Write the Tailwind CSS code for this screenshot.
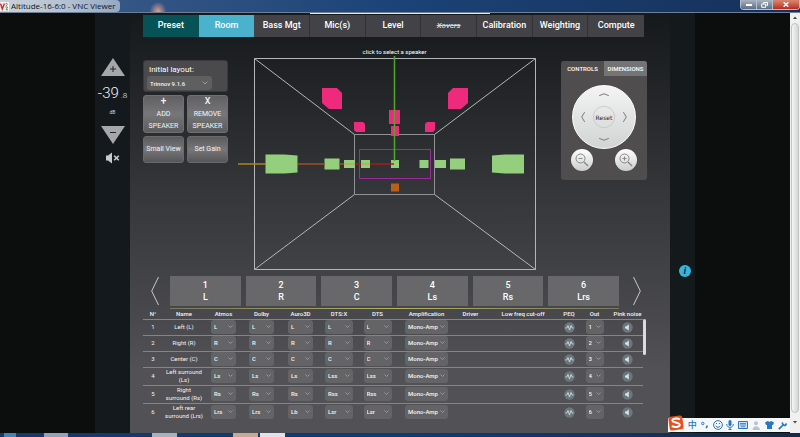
<!DOCTYPE html>
<html lang="en">
<head>
  <meta charset="utf-8" />
  <meta name="viewport" content="width=device-width, initial-scale=1.0" />
  <title>Altitude-16-6:0 - VNC Viewer</title>
  <script src="https://cdn.jsdelivr.net/npm/@tailwindcss/browser@4"></script>
</head>
<body class="font-['Roboto',sans-serif] bg-[#0b0e0d] text-gray-100">
<div class="relative min-h-screen flex flex-col">

  <!-- Window title bar -->
  <header class="h-[13px] flex items-start border-b border-[#6f7f98] bg-linear-to-r from-[#3f5f8c] via-[#1b4377] to-[#16305a]">
    <div class="h-3 flex items-center gap-[2px] pr-1 rounded-r-sm bg-linear-to-r from-[#c9d0da] via-[#b6c3d3] to-[#94a9c4]">
      <svg class="w-[9px] h-[9px]" viewBox="0 0 9 9">
        <rect width="9" height="9" fill="#f4f4f4" />
        <path d="M.5 1.5 2.3 7 4.4 1.5" fill="none" stroke="#d3272b" stroke-width="1.4" />
        <path d="M5.3 2.2C6 1 7.6 1.2 7.3 2.6L5.6 4.2M5.6 5h2L6 7.8h2" fill="none" stroke="#4a8a4d" stroke-width=".9" />
      </svg>
      <h1 class="font-['Open_Sans',sans-serif] text-[8px] leading-3 text-[#10151c]">Altitude-16-6:0 - VNC Viewer</h1>
    </div>
    <div class="flex-1 h-3 flex">
      <div class="ml-7 w-5 h-3 bg-radial-[at_50%_100%] from-[#e9a48c] to-transparent to-60%"></div>
    </div>
    <div class="flex h-[10px] rounded-b-sm overflow-hidden border border-t-0 border-[#b6c0cd]">
      <button class="w-4 bg-linear-to-b from-[#a9b3c2] to-[#5e6f88] border-r border-[#b6c0cd] flex items-center justify-center" aria-label="Minimize">
        <span class="block w-[6px] h-[2px] bg-white"></span>
      </button>
      <button class="w-4 bg-linear-to-b from-[#a9b3c2] to-[#5e6f88] border-r border-[#b6c0cd] flex items-center justify-center" aria-label="Restore">
        <svg class="w-[7px] h-[6px]" viewBox="0 0 7 6" fill="none" stroke="#fff"><path d="M2.5 1.5V.5h4v3h-1M.7 2h4v3.3h-4z" /></svg>
      </button>
      <button class="w-[26px] bg-linear-to-b from-[#d98672] to-[#b8291b] flex items-center justify-center" aria-label="Close">
        <svg class="w-[6px] h-[5px]" viewBox="0 0 6 5" stroke="#fff" stroke-width="1.5"><path d="M.7.3l4.6 4.4M5.3.3L.7 4.7" /></svg>
      </button>
    </div>
  </header>

  <div class="flex-1 flex">
    <div class="w-[95px] shrink-0"></div>

    <!-- Volume -->
    <aside class="w-[35px] shrink-0 bg-[#14191d] pt-[45px] flex flex-col items-center">
      <button aria-label="Volume up">
        <svg class="w-6 h-[18px]" viewBox="0 0 24 18"><path d="M12 0 24 18H0z" fill="#a6a7aa" /><path d="M9 11h6M12 8v6" stroke="#22272b" /></svg>
      </button>
      <div class="mt-[9px] flex items-baseline gap-[2px] font-light leading-4">
        <span class="text-[15px]">-39</span><span class="text-[8px]">.8</span>
      </div>
      <span class="mt-1 text-[5px] leading-2 text-gray-300">dB</span>
      <button class="mt-[10px]" aria-label="Volume down">
        <svg class="w-6 h-[18px]" viewBox="0 0 24 18"><path d="M12 18 24 0H0z" fill="#a6a7aa" /><path d="M9 6.5h6" stroke="#22272b" /></svg>
      </button>
      <button class="mt-2" aria-label="Mute">
        <svg class="w-[14px] h-3" viewBox="0 0 14 12"><path d="M0 3.5h2L6 .5v11l-4-3H0z" fill="#c9cacc" /><path d="M8.2 3.7l4.6 4.6M12.8 3.7 8.2 8.3" stroke="#c9cacc" stroke-width="1.6" /></svg>
      </button>
    </aside>

    <!-- Main panel -->
    <main class="flex-1 min-w-0 relative pl-[13px] pr-[23px] pt-[2px] pb-3 bg-linear-to-b from-[#16191c] from-0% via-[#36383c] via-45% to-[#525155] to-85%">
      <div class="absolute top-0 left-1/3 w-1/3 h-px bg-white/90"></div>
      <nav class="mr-[3px] h-[22px] grid grid-cols-9 text-[9px] font-medium text-white">
        <button class="bg-[#075257]">Preset</button>
        <button class="bg-[#4ab2cd]">Room</button>
        <button class="bg-[#434347] border-r border-[#303236]">Bass Mgt</button>
        <button class="bg-[#434347] border-r border-[#303236]">Mic(s)</button>
        <button class="bg-[#434347] border-r border-[#303236]">Level</button>
        <button class="bg-[#434347] border-r border-[#303236] italic line-through text-gray-300 text-[8px]">Xovers</button>
        <button class="bg-[#434347] border-r border-[#303236]">Calibration</button>
        <button class="bg-[#434347] border-r border-[#303236]">Weighting</button>
        <button class="bg-[#434347]">Compute</button>
      </nav>

      <div class="mt-[11px] flex items-start">
        <section class="w-[85px] shrink-0 pt-3">
          <div class="h-8 rounded-[3px] bg-[#4a4a4d] border border-[#3a3a3d] px-[3px] pt-1">
            <label for="layout" class="block pl-[2px] text-[8px] leading-[10px] text-white">Initial layout:</label>
            <div class="relative w-[65px] mt-px">
              <select id="layout" class="block appearance-none w-full h-[14px] rounded-[3px] bg-[#605f5f] pl-[3px] text-[6px] font-medium">
                <option>Trinnov 9.1.6</option>
              </select>
              <svg class="absolute right-1 top-[5px] w-[6px] h-1 pointer-events-none" viewBox="0 0 6 4" fill="none" stroke="#999"><path d="M.5.5 3 3 5.5.5" /></svg>
            </div>
          </div>
          <div class="mt-[3px] grid grid-cols-2 gap-[3px] text-[7px] text-gray-100">
            <button class="h-[38px] rounded-[3px] bg-linear-to-b from-[#606063] via-[#77777a] to-[#5c5c5f] border border-[#707073] flex flex-col items-center">
              <span class="text-[10px] leading-[10px] font-medium">+</span>
              <span class="leading-3 pt-[2px]">ADD</span>
              <span class="leading-3">SPEAKER</span>
            </button>
            <button class="h-[38px] rounded-[3px] bg-linear-to-b from-[#606063] via-[#77777a] to-[#5c5c5f] border border-[#707073] flex flex-col items-center">
              <span class="text-[9px] leading-[10px] font-medium">X</span>
              <span class="leading-3 pt-[2px]">REMOVE</span>
              <span class="leading-3">SPEAKER</span>
            </button>
            <button class="h-[27px] rounded-[3px] bg-linear-to-b from-[#5b5b5e] via-[#77777a] to-[#565659] border border-[#6a6a6d]">Small View</button>
            <button class="h-[27px] rounded-[3px] bg-linear-to-b from-[#5b5b5e] via-[#77777a] to-[#565659] border border-[#6a6a6d]">Set Gain</button>
          </div>
        </section>

        <!-- Speaker room view -->
        <section class="flex-1 min-w-0">
          <p class="text-center text-[6px] leading-2 text-white">click to select a speaker</p>
          <svg class="block w-full" viewBox="228 56 333 216" fill="none">
            <g stroke="#b4b5b8">
              <path d="M254.500 58.500h281v211h-281z" />
              <path d="M354.500 134.500h80v60h-80z" stroke="#909194" />
              <path d="M254.500 58.500l100 76M535.500 58.500l-101 76M254.500 269.500l100-75M535.500 269.500l-101-75" />
            </g>
            <g fill="#ed2a7b">
              <path d="M322 88h15l5 5v16h-13l-7-6z" />
              <path d="M468 88h-15l-5 5v16h13l7-6z" />
              <path d="M354 122h9l2 2v8h-9l-2-2z" />
              <path d="M435 122h-8l-2 2v8h8l2-2z" />
              <path d="M389 110h11v14h-11zM391 126h8v10h-8z" />
            </g>
            <path d="M359.500 149.500h71v29h-71z" stroke="#9c2a9b" />
            <g fill="#93cf7c">
              <path d="M265.500 154.500h19l13 1v17l-13 1h-19z" />
              <path d="M524 154.500h-19l-13 1v17l13 1h19z" />
              <path d="M324.500 158.500h15v11h-15zM344 160h11v8h-11zM361 160h9v8h-9zM391 160h8v8h-8z" />
              <path d="M419.500 160h9v8h-9zM435 160h11v8h-11zM450 158.500h15v11h-15z" />
            </g>
            <path d="M238 164h28" stroke="#b0831f" stroke-width="1.500" />
            <path d="M298 164h27M339.500 164h4.500" stroke="#a2501f" stroke-width="1.500" />
            <path d="M344 164h11M361 164h9" stroke="#c99a45" stroke-width="1.200" />
            <path d="M355 164h6M370 164h24" stroke="#a51e1c" stroke-width="1.500" />
            <path d="M394.500 56v105" stroke="#55a52a" stroke-width="1.500" />
            <path d="M391 183.500h8v8h-8z" fill="#ba5e18" />
          </svg>
        </section>

        <!-- View controls -->
        <section class="w-[86px] shrink-0 mt-[13px] h-[119px] rounded-[3px] overflow-hidden bg-[#4f4d4e]">
          <div class="grid grid-cols-2 h-[15px] text-[6px] text-white">
            <button class="font-medium">CONTROLS</button>
            <button class="font-medium bg-[#747476]">DIMENSIONS</button>
          </div>
          <div class="relative mt-[9px] mx-auto size-16 rounded-full bg-linear-to-b from-[#f4f4f4] to-[#d2d3d3] border border-white">
            <svg class="absolute inset-0 size-full" viewBox="0 0 64 64" fill="none" stroke="#777">
              <path d="M27 10l5-2 5 2M27 54l5 2 5-2M12 27l-3 5 3 5M52 27l3 5-3 5" />
              <circle cx="32" cy="32" r="11" stroke="#c4c4c4" stroke-width=".8" />
            </svg>
            <button class="relative block mx-auto w-6 h-full font-['DejaVu_Sans',sans-serif] text-[6px] font-medium text-[#222]">Reset</button>
          </div>
          <div class="flex justify-between px-[10px]">
            <button class="size-[22px] rounded-full bg-linear-to-b from-white to-[#cccdcd] flex items-center justify-center" aria-label="Zoom out">
              <svg class="size-[14px]" viewBox="0 0 14 14" fill="none" stroke="#888"><circle cx="5.500" cy="5.500" r="4.500" /><path d="M9 9l4 4" stroke-width="1.500" /><path d="M3.500 5.500h4" /></svg>
            </button>
            <button class="size-[22px] rounded-full bg-linear-to-b from-white to-[#cccdcd] flex items-center justify-center" aria-label="Zoom in">
              <svg class="size-[14px]" viewBox="0 0 14 14" fill="none" stroke="#888"><circle cx="5.500" cy="5.500" r="4.500" /><path d="M9 9l4 4" stroke-width="1.500" /><path d="M3.500 5.500h4M5.500 3.500v4" /></svg>
            </button>
          </div>
        </section>
      </div>

      <!-- Speaker picker -->
      <div class="mt-1 flex items-center">
        <button class="w-[27px] pl-2" aria-label="Previous speakers">
          <svg class="block w-2 h-[30px]" viewBox="0 0 8 30" fill="none" stroke="#c8c8ca"><path d="M7.500 1 .7 15l6.800 14" /></svg>
        </button>
        <div id="speakers" class="flex-1 grid grid-cols-6 gap-[5px]"></div>
        <button class="w-7 pl-[14px]" aria-label="Next speakers">
          <svg class="block w-2 h-[30px]" viewBox="0 0 8 30" fill="none" stroke="#c8c8ca"><path d="M.5 1l6.800 14L.5 29" /></svg>
        </button>
      </div>
      <div class="mt-[2px] ml-[27px] mr-7 h-px bg-linear-to-r from-[#77785f] via-[#b3b45c] to-[#77785f]"></div>

      <!-- Speaker table -->
      <div class="flex">
        <table class="flex-1 w-full table-fixed text-center text-[6px] leading-2">
          <colgroup>
            <col class="w-[20px]" /><col class="w-[42px]" /><col class="w-[37px]" /><col class="w-[39px]" />
            <col class="w-[39px]" /><col class="w-[38px]" /><col class="w-[39px]" /><col class="w-[59px]" />
            <col class="w-[29px]" /><col class="w-[76px]" /><col class="w-[16px]" /><col class="w-[35px]" />
            <col class="w-[31px]" />
          </colgroup>
          <thead>
            <tr class="h-[10px] border-b border-[#858588] whitespace-nowrap">
              <th class="font-medium">N°</th>
              <th class="font-medium">Name</th>
              <th class="font-medium">Atmos</th>
              <th class="font-medium">Dolby</th>
              <th class="font-medium">Auro3D</th>
              <th class="font-medium">DTS:X</th>
              <th class="font-medium">DTS</th>
              <th class="font-medium">Amplification</th>
              <th class="font-medium">Driver</th>
              <th class="font-medium">Low freq cut-off</th>
              <th class="font-medium">PEQ</th>
              <th class="font-medium">Out</th>
              <th class="font-medium">Pink noise</th>
            </tr>
          </thead>
          <tbody id="rows"></tbody>
        </table>
        <div class="w-1 shrink-0 pt-[10px]">
          <div class="w-[3px] h-9 rounded-full bg-[#dcdcde]"></div>
        </div>
      </div>
    </main>

    <aside class="w-[25px] shrink-0 bg-[#14191c] pt-[252px]">
      <button class="ml-[9px] block size-3 rounded-full bg-[#35b5dc] font-['Liberation_Serif',serif] text-[10px] leading-3 font-bold italic text-[#0b2a3a]" aria-label="Info">i</button>
    </aside>
    <div class="w-[95px] shrink-0"></div>

    <!-- Window scrollbar -->
    <div class="w-[10px] shrink-0 bg-[#f0f0f0] flex flex-col items-center">
      <svg class="w-[10px] h-[10px]" viewBox="0 0 10 10"><path d="M5 3.500 7 6H3z" fill="#444" /></svg>
      <div class="w-2 flex-1 rounded-sm border border-[#c3c3c3] bg-linear-to-r from-[#f6f6f6] to-[#d4d4d6]"></div>
      <svg class="w-[10px] h-5" viewBox="0 0 10 20"><path d="M5 10.500 7 8H3z" fill="#444" /></svg>
    </div>
  </div>

  <!-- Taskbar -->
  <footer class="h-1 bg-linear-to-r from-[#143a68] via-[#0d3c78] to-[#122c4e] flex">
    <div class="ml-1 w-3 bg-[#4283b8]"></div>
    <div class="ml-7 w-6 bg-[#8fa4bb]"></div>
    <div class="ml-[84px] w-[25px] bg-[#a5b2c0]"></div>
    <div class="ml-14 w-[25px] bg-[#c3ac92]"></div>
    <div class="ml-[2px] w-[25px] bg-[#dde3ea]"></div>
  </footer>

  <!-- Input method bar -->
  <div class="absolute right-[10px] bottom-[5px] h-[14px] w-[122px] bg-[#f5f7f9] flex items-center justify-between pr-[3px] text-[#2678c3]">
    <svg class="w-4 h-4 -mt-1 shrink-0" viewBox="0 0 16 16"><rect x="1" y="1" width="14" height="14" rx="2.500" fill="#e8501f" transform="rotate(-8 8 8)" /><path d="M12 4.300C8 2.500 4 4 4.500 6c.5 1.700 7.500 1.500 7.300 3.900-.2 2.300-5 2.700-8 1.100" fill="none" stroke="#fff" stroke-width="2" /></svg>
    <span class="font-['Noto_Sans_CJK_SC',sans-serif] text-[9px] leading-3 font-medium">中</span>
    <svg class="w-2 h-2" viewBox="0 0 8 8"><circle cx="1.800" cy="2.500" r="1.200" fill="none" stroke="currentColor" /><path d="M6 4.500v1.200L5 7" fill="none" stroke="currentColor" stroke-width="1.600" /></svg>
    <svg class="w-[10px] h-[10px]" viewBox="0 0 10 10" fill="none" stroke="currentColor"><circle cx="5" cy="5" r="4.400" /><path d="M2.700 5.800c1 2 3.600 2 4.600 0M3.500 3v1M6.500 3v1" /></svg>
    <svg class="w-2 h-[10px]" viewBox="0 0 8 10"><rect x="2.500" width="3" height="6" rx="1.500" fill="currentColor" /><path d="M.7 4c0 4.500 6.600 4.500 6.600 0M4 7.500V10M2.500 9.500h3" fill="none" stroke="currentColor" /></svg>
    <svg class="w-[10px] h-2" viewBox="0 0 10 8"><path d="M.5.500h9v7h-9z" fill="#cfe1f2" stroke="currentColor" /><path d="M2 2.500h6M2 4h6M3 5.700h4" stroke="currentColor" stroke-width=".8" /></svg>
    <svg class="w-[9px] h-[9px]" viewBox="0 0 9 9" fill="#b9c3ce"><circle cx="4" cy="2.200" r="2" /><path d="M.5 9c0-5 7-5 7.500 0z" /></svg>
    <svg class="w-[9px] h-2" viewBox="0 0 9 8"><path d="M0 1.500 2.800 0c.8 1 2.600 1 3.400 0L9 1.500 8 4H7v4H2V4H1z" fill="currentColor" /></svg>
    <svg class="w-[9px] h-[9px]" viewBox="0 0 9 9"><path d="M.8 8.200 5 4M4.700 1.500c-.8 1.200 1.400 3.600 2.800 2.700L8.500 2.500" fill="none" stroke="currentColor" stroke-width="1.700" /></svg>
  </div>
</div>

<script>
  const speakers = [
    { name: 'Left (L)', ch: 'L', formats: ['L', 'L', 'L', 'L', 'L'] },
    { name: 'Right (R)', ch: 'R', formats: ['R', 'R', 'R', 'R', 'R'] },
    { name: 'Center (C)', ch: 'C', formats: ['C', 'C', 'C', 'C', 'C'] },
    { name: 'Left surround (Ls)', ch: 'Ls', formats: ['Ls', 'Ls', 'Ls', 'Lss', 'Lss'] },
    { name: 'Right surround (Rs)', ch: 'Rs', formats: ['Rs', 'Rs', 'Rs', 'Rss', 'Rss'] },
    { name: 'Left rear surround (Lrs)', ch: 'Lrs', formats: ['Lrs', 'Lrs', 'Lb', 'Lsr', 'Lsr'] },
  ];
  const formatNames = ['Atmos', 'Dolby', 'Auro3D', 'DTS:X', 'DTS'];
  const formatWidths = ['w-[25px]', 'w-[25px]', 'w-[25px]', 'w-[28px]', 'w-[28px]'];

  function dropdown(value, label, width) {
    return `
      <div class="relative mx-auto ${width}">
        <select aria-label="${label}" class="block appearance-none w-full h-[14px] rounded-[3px] bg-[#646466] pl-[3px] text-[6px] font-medium">
          <option>${value}</option>
        </select>
        <svg class="absolute right-[3px] top-[5px] w-[5px] h-1 pointer-events-none" viewBox="0 0 5 4" fill="none" stroke="#98989a"><path d="M.5.5l2 2 2-2" /></svg>
      </div>`;
  }

  function renderSpeakers() {
    document.getElementById('speakers').innerHTML = speakers.map((s, i) => `
      <button class="h-[30px] bg-[#68686a] text-[9px] leading-3 font-medium text-white">
        <span class="block">${i + 1}</span>
        <span class="block">${s.ch}</span>
      </button>`).join('');
  }

  function renderRows() {
    document.getElementById('rows').innerHTML = speakers.map((s, i) => `
      <tr class="${i < 3 ? 'h-4' : 'h-[18px]'} border-b border-[#858588] last:border-b-0">
        <td>${i + 1}</td>
        <td class="px-[2px]">${s.name}</td>
        ${s.formats.map((f, n) => `<td>${dropdown(f, formatNames[n] + ' ' + s.ch, formatWidths[n])}</td>`).join('')}
        <td>${dropdown('Mono-Amp', 'Amplification ' + s.ch, 'w-[43px]')}</td>
        <td></td>
        <td></td>
        <td>
          <button class="block mx-auto" aria-label="PEQ ${s.ch}">
            <svg class="block size-[11px]" viewBox="0 0 11 11"><circle cx="5.500" cy="5.500" r="5.200" fill="#6b777c" /><path d="M1.500 6h1.300L4 3.500 5.500 8 7 3.500 8.200 6h1.300" fill="none" stroke="#cfdde0" stroke-width=".9" /></svg>
          </button>
        </td>
        <td>${dropdown(i + 1, 'Output ' + s.ch, 'w-[18px]')}</td>
        <td>
          <button class="block mx-auto" aria-label="Pink noise ${s.ch}">
            <svg class="block size-[11px]" viewBox="0 0 11 11"><circle cx="5.500" cy="5.500" r="5.200" fill="#6b777c" /><path d="M3 4.500h1L6.800 2.500v6L4 6.500H3z" fill="#d6e3e6" /></svg>
          </button>
        </td>
      </tr>`).join('');
  }

  renderSpeakers();
  renderRows();
</script>
</body>
</html>
